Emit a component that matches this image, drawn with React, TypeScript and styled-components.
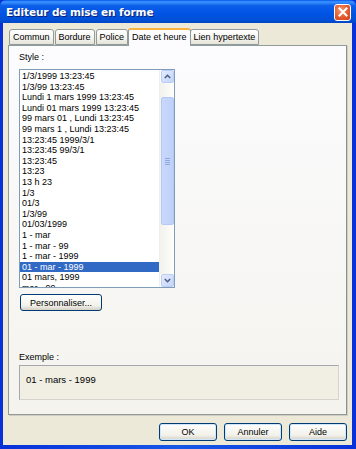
import React from "react";
import styled, { createGlobalStyle } from "styled-components";

const GlobalStyle = createGlobalStyle`
  html, body {
    margin: 0;
    padding: 0;
    background: #ffffff;
  }
  body {
    font-family: "Liberation Sans", Arial, sans-serif;
  }
`;

const styles = [
  "1/3/1999 13:23:45",
  "1/3/99 13:23:45",
  "Lundi 1 mars 1999 13:23:45",
  "Lundi 01 mars 1999 13:23:45",
  "99 mars 01 , Lundi 13:23:45",
  "99 mars 1 , Lundi 13:23:45",
  "13:23:45 1999/3/1",
  "13:23:45 99/3/1",
  "13:23:45",
  "13:23",
  "13 h 23",
  "1/3",
  "01/3",
  "1/3/99",
  "01/03/1999",
  "1 - mar",
  "1 - mar - 99",
  "1 - mar - 1999",
  "01 - mar - 1999",
  "01 mars, 1999",
  "mar - 99",
];

const tabs = ["Commun", "Bordure", "Police", "Date et heure", "Lien hypertexte"];

const App = () => {
  const selected = 18;
  return (
    <>
      <GlobalStyle />
      <Window>
        <TitleBar>
          <Title>Editeur de mise en forme</Title>
          <CloseButton>
            <svg width="10" height="10" viewBox="0 0 10 10">
              <path d="M1.5 1.5 L8.5 8.5 M8.5 1.5 L1.5 8.5" stroke="#fff" strokeWidth="2" strokeLinecap="square" />
            </svg>
          </CloseButton>
        </TitleBar>
        <Client>
          <TabRow>
            {tabs.map((t) => (
              <Tab key={t} active={t === "Date et heure"}>
                {t}
              </Tab>
            ))}
          </TabRow>
          <Panel>
            <Label>Style :</Label>
            <ListBox>
              <ListItems>
                {styles.map((s, i) => (
                  <ListItem key={s} selected={i === selected}>
                    {s}
                  </ListItem>
                ))}
              </ListItems>
              <ScrollBar>
                <ScrollButton>
                  <svg width="7" height="5" viewBox="0 0 7 5">
                    <path d="M0.8 4 L3.5 1.3 L6.2 4" stroke="#4d6185" strokeWidth="1.6" fill="none" />
                  </svg>
                </ScrollButton>
                <ScrollTrack>
                  <Thumb>
                    <Grip />
                    <Grip />
                    <Grip />
                    <Grip />
                  </Thumb>
                </ScrollTrack>
                <ScrollButton>
                  <svg width="7" height="5" viewBox="0 0 7 5">
                    <path d="M0.8 1 L3.5 3.7 L6.2 1" stroke="#4d6185" strokeWidth="1.6" fill="none" />
                  </svg>
                </ScrollButton>
              </ScrollBar>
            </ListBox>
            <SmallButton>Personnaliser...</SmallButton>
            <ExampleLabel>Exemple :</ExampleLabel>
            <ExampleBox>01 - mars - 1999</ExampleBox>
          </Panel>
          <Footer>
            <DialogButton>OK</DialogButton>
            <DialogButton>Annuler</DialogButton>
            <DialogButton>Aide</DialogButton>
          </Footer>
        </Client>
      </Window>
    </>
  );
};

const Window = styled.div`
  width: 356px;
  height: 449px;
  box-sizing: border-box;
  display: flex;
  flex-direction: column;
  background: linear-gradient(90deg, #0831d9 0%, #1658e6 50%, #0831d9 100%);
  padding: 0 4px 4px 3px;
`;

const TitleBar = styled.div`
  height: 23px;
  margin: 0 -4px 0 -3px;
  padding: 0 5px 0 6px;
  display: flex;
  align-items: center;
  justify-content: space-between;
  border-radius: 6px 6px 0 0;
  background: linear-gradient(
    180deg,
    #0058ee 0%,
    #3d95ff 8%,
    #0a5ee9 25%,
    #0054e3 60%,
    #0050d8 85%,
    #0046c4 100%
  );
`;

const Title = styled.div`
  color: #ffffff;
  font-family: "DejaVu Sans", sans-serif;
  font-weight: bold;
  font-size: 10.5px;
  text-shadow: 1px 1px #0a1f72;
  letter-spacing: -0.1px;
`;

const CloseButton = styled.div`
  width: 15px;
  height: 15px;
  margin-top: 1px;
  border: 1px solid #ffffff;
  border-radius: 3px;
  background: radial-gradient(circle at 40% 35%, #f39a70 0%, #e45a2c 55%, #cc4418 100%);
  display: flex;
  align-items: center;
  justify-content: center;
`;

const Client = styled.div`
  flex: 1;
  display: flex;
  flex-direction: column;
  background: #ece9d8;
  padding: 5px 5px 0 5px;
`;

const TabRow = styled.div`
  display: flex;
  align-items: flex-end;
  height: 17px;
  padding-left: 1px;
  position: relative;
  z-index: 1;
`;

const Tab = styled.div<{ active?: boolean }>`
  box-sizing: border-box;
  height: ${(p) => (p.active ? "18px" : "16px")};
  margin-bottom: ${(p) => (p.active ? "-1px" : "0")};
  margin-right: ${(p) => (p.active ? "-1px" : "1px")};
  margin-left: ${(p) => (p.active ? "-1px" : "0")};
  padding: 0 3px;
  display: flex;
  align-items: center;
  font-size: 9px;
  color: #000;
  border: 1px solid #919b9c;
  border-bottom: ${(p) => (p.active ? "none" : "1px solid #919b9c")};
  border-top: ${(p) => (p.active ? "2px solid #f7b33d" : "1px solid #919b9c")};
  border-radius: 3px 3px 0 0;
  background: ${(p) =>
    p.active ? "#fcfcfe" : "linear-gradient(180deg, #ffffff 0%, #f4f3ee 60%, #e6e4d9 100%)"};
  padding-bottom: ${(p) => (p.active ? "2px" : "0")};
`;

const Panel = styled.div`
  height: 370px;
  box-sizing: border-box;
  border: 1px solid #919b9c;
  border-right-color: #8a9192;
  box-shadow: 1px 1px 0 #d0cec3;
  background: linear-gradient(180deg, #fcfcfe 0%, #f4f3ee 100%);
  padding: 6px 0 0 10px;
  display: flex;
  flex-direction: column;
  align-items: flex-start;
`;

const Label = styled.div`
  font-size: 9px;
  line-height: 11px;
  color: #000;
  margin-bottom: 6px;
`;

const ListBox = styled.div`
  width: 156px;
  height: 219px;
  box-sizing: border-box;
  border: 1px solid #7f9db9;
  background: #ffffff;
  display: flex;
  overflow: hidden;
`;

const ListItems = styled.div`
  flex: 1;
  overflow: hidden;
  padding-top: 1px;
`;

const ListItem = styled.div<{ selected?: boolean }>`
  height: 10.6px;
  line-height: 10.6px;
  font-size: 9px;
  padding-left: 2px;
  white-space: nowrap;
  color: ${(p) => (p.selected ? "#ffffff" : "#000000")};
  background: ${(p) => (p.selected ? "#316ac5" : "transparent")};
`;

const ScrollBar = styled.div`
  width: 14px;
  display: flex;
  flex-direction: column;
  background: #fcfcf9;
  border-left: 1px solid #f0efe9;
`;

const ScrollButton = styled.div`
  height: 13px;
  box-sizing: border-box;
  margin: 0 0 0 1px;
  border: 1px solid #bccef7;
  border-radius: 2px;
  background: linear-gradient(135deg, #e3ebfd 0%, #c4d5fb 100%);
  display: flex;
  align-items: center;
  justify-content: center;
`;

const ScrollTrack = styled.div`
  flex: 1;
  padding: 14px 0 49px 1px;
  display: flex;
  background: linear-gradient(90deg, #f3f1ec 0%, #fefefb 100%);
`;

const Thumb = styled.div`
  flex: 1;
  box-sizing: border-box;
  border: 1px solid #b4c8f6;
  border-radius: 2px;
  background: linear-gradient(90deg, #c9d8fc 0%, #bfd1f9 100%);
  display: flex;
  flex-direction: column;
  align-items: center;
  justify-content: center;
  gap: 1px;
`;

const Grip = styled.div`
  width: 5px;
  height: 1px;
  background: #8fa9e0;
`;

const SmallButton = styled.div`
  margin-top: 6px;
  margin-left: 1px;
  width: 82px;
  height: 17px;
  box-sizing: border-box;
  border: 1px solid #003c74;
  border-radius: 3px;
  background: linear-gradient(180deg, #ffffff 0%, #f2f1ea 70%, #d6d0c5 100%);
  font-size: 9px;
  display: flex;
  align-items: center;
  justify-content: center;
`;

const ExampleLabel = styled.div`
  margin-top: 41px;
  font-size: 9px;
  line-height: 11px;
`;

const ExampleBox = styled.div`
  margin-top: 2px;
  width: 320px;
  height: 35px;
  box-sizing: border-box;
  border: 1px solid #a7a6aa;
  border-right-color: #d6d3ce;
  border-bottom-color: #d6d3ce;
  background: #f1efe4;
  font-size: 9.5px;
  padding: 8px 0 0 6px;
`;

const Footer = styled.div`
  display: flex;
  justify-content: flex-end;
  gap: 7px;
  padding-top: 8px;
`;

const DialogButton = styled.div`
  width: 58px;
  height: 18px;
  box-sizing: border-box;
  border: 1px solid #003c74;
  border-radius: 3px;
  background: linear-gradient(180deg, #ffffff 0%, #f2f1ea 70%, #d6d0c5 100%);
  box-shadow: inset 0 0 0 1px #cee7ff;
  font-size: 9px;
  display: flex;
  align-items: center;
  justify-content: center;
`;

export default App;
